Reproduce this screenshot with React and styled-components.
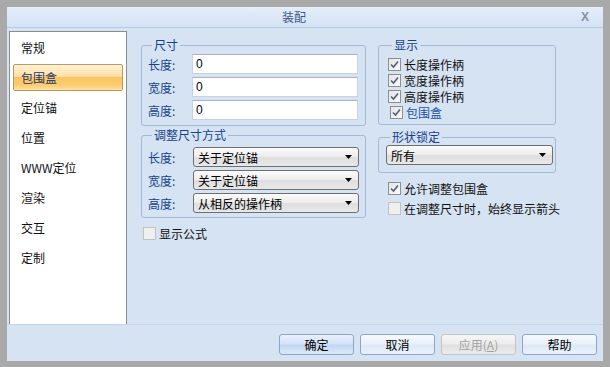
import React from 'react';
import styled, { createGlobalStyle } from 'styled-components';

const GlobalStyle = createGlobalStyle`
    html, body {
        margin: 0;
        padding: 0;
        background: #a9a9a9;
    }
    body {
        font-family: "Noto Sans CJK SC", "Liberation Sans", sans-serif;
        font-size: 12px;
    }
`;

const Frame = styled.div`
    width: 610px;
    height: 367px;
    box-sizing: border-box;
    padding: 7px 7px 6px 7px;
    background: #a9a9a9;
    display: flex;
`;

const Window = styled.div`
    flex: 1;
    display: flex;
    flex-direction: column;
    background: #d6e3f3;
`;

const TitleBar = styled.div`
    height: 20px;
    display: flex;
    align-items: center;
    background: linear-gradient(#e5eefa, #d3e2f5);
    border-bottom: 1px solid #b4cbe8;
`;

const Title = styled.div`
    flex: 1;
    text-align: center;
    color: #3d5a86;
    font-size: 12px;
    line-height: 20px;
`;

const Close = styled.div`
    width: 12px;
    margin-right: 10px;
    color: #8592a3;
    font-family: "Liberation Sans", sans-serif;
    font-weight: bold;
    font-size: 12px;
    line-height: 20px;
`;

const Body = styled.div`
    flex: 1;
    display: flex;
    padding: 3px 0 0 2px;
`;

// left navigation
const Nav = styled.div`
    width: 118px;
    box-sizing: border-box;
    background: white;
    border: 1px solid #8d8d8d;
    border-bottom: none;
    padding: 2px 3px;
    display: flex;
    flex-direction: column;
    gap: 3px;
`;

const NavItem = styled.div`
    height: 27px;
    box-sizing: border-box;
    display: flex;
    align-items: center;
    padding-left: 7px;
    border: 1px solid transparent;
    border-radius: 2px;
    color: #111;
    font-size: 12px;

    ${props => props.$active ? `
        color: #1b3565;
        border-color: #bc9a5c;
        background: linear-gradient(#fff2d6 0%, #fde0a8 45%, #fbc464 50%, #fbcc6e 80%, #fde2a6 100%);
    ` : ''}
`;

const Content = styled.div`
    flex: 1;
    display: flex;
    gap: 12px;
    padding: 7px 0 0 14px;
`;

const Column = styled.div`
    width: ${props => props.$width}px;
    display: flex;
    flex-direction: column;
`;

const Group = styled.fieldset`
    margin: ${props => props.$top || 0}px 0 0 0;
    padding: 0 ${props => props.$right}px ${props => props.$bottom}px ${props => props.$left}px;
    border: 1px solid #a3b9d6;
    border-radius: 3px;
    min-width: 0;
`;

const Legend = styled.legend`
    margin-left: 4px;
    padding: 0 2px;
    color: #15428b;
    font-size: 12px;
    line-height: 14px;
`;

const Rows = styled.div`
    display: flex;
    flex-direction: column;
    gap: ${props => props.$gap}px;
    margin-top: ${props => props.$top}px;
`;

const FieldRow = styled.div`
    display: flex;
    align-items: center;
    height: 20px;
`;

const Label = styled.div`
    width: ${props => props.$width}px;
    color: #15428b;
    font-size: 12px;
`;

const Input = styled.div`
    flex: 1;
    height: 20px;
    box-sizing: border-box;
    background: white;
    border: 1px solid #c7d3e2;
    border-top-color: #a6b4c6;
    padding-left: 3px;
    font-family: "Liberation Sans", sans-serif;
    font-size: 12px;
    line-height: 18px;
    color: #000;
`;

const Select = styled.div`
    flex: 1;
    height: 20px;
    box-sizing: border-box;
    display: flex;
    align-items: center;
    justify-content: space-between;
    padding: 0 6px 0 4px;
    border: 1px solid #6f6f6f;
    border-radius: 3px;
    background: linear-gradient(#fbfbfb, #ececec 50%, #dedede 51%, #e8e8e8);
    color: #000;
    font-size: 12px;
`;

const CheckRow = styled.div`
    display: flex;
    align-items: center;
    gap: 3px;
    height: ${props => props.$height || 16}px;
    padding-left: ${props => props.$indent || 0}px;
    color: ${props => props.$link ? '#1a52a6' : '#111'};
    font-size: 12px;
    white-space: nowrap;
`;

const Box = styled.span`
    flex: none;
    width: 11px;
    height: 11px;
    display: inline-flex;
    align-items: center;
    justify-content: center;
    border: 1px solid ${props => props.$disabled ? '#c2c2c2' : '#8e8f8f'};
    background: ${props => props.$disabled ? '#efefef' : 'linear-gradient(135deg, #e4e4e4, #fafafa)'};
`;

const Footer = styled.div`
    height: 37px;
    box-sizing: border-box;
    border-top: 1px solid #c3d6ed;
    display: flex;
    justify-content: flex-end;
    align-items: flex-start;
    gap: 6px;
    padding: 9px 6px 0 0;
`;

const Button = styled.div`
    width: 75px;
    height: 21px;
    box-sizing: border-box;
    display: flex;
    align-items: center;
    justify-content: center;
    border: 1px solid #8aa6cf;
    border-radius: 3px;
    font-size: 12px;
    color: #000;
    background: ${props => props.$primary
        ? 'linear-gradient(#e8f0fb, #d3e2f6 48%, #c2d6f1 52%, #dce8f8)'
        : 'linear-gradient(#f7faff, #e9f0fa 48%, #dde8f6 52%, #eaf1fb)'};

    &.disabled {
        border-color: #c4c4c4;
        color: #a3a3a3;
        background: linear-gradient(#f6f6f6, #ececec 48%, #e0e0e0 52%, #ebebeb);
    }
`;

const Check = ({ checked, disabled }) => (
    <Box $disabled={disabled}>
        {checked && (
            <svg width="9" height="9" viewBox="0 0 9 9">
                <path d="M1 4.5 L3.5 7 L8 1.5" fill="none" stroke="#4d6080" strokeWidth="1.6" />
            </svg>
        )}
    </Box>
);

const Arrow = () => (
    <svg width="7" height="4" viewBox="0 0 7 4">
        <path d="M0 0 H7 L3.5 4 Z" fill="#000" />
    </svg>
);

const navItems = ['常规', '包围盒', '定位锚', '位置', 'WWW定位', '渲染', '交互', '定制'];

const App = () => (
    <Frame>
        <GlobalStyle />
        <Window>
            <TitleBar>
                <Title>装配</Title>
                <Close>X</Close>
            </TitleBar>
            <Body>
                <Nav>
                    {navItems.map(item => (
                        <NavItem key={item} $active={item === '包围盒'}>{item}</NavItem>
                    ))}
                </Nav>
                <Content>
                    <Column $width={225}>
                        <Group $left={6} $right={7} $bottom={5}>
                            <Legend>尺寸</Legend>
                            <Rows $gap={3} $top={2}>
                                {['长度:', '宽度:', '高度:'].map(l => (
                                    <FieldRow key={l}>
                                        <Label $width={44}>{l}</Label>
                                        <Input>0</Input>
                                    </FieldRow>
                                ))}
                            </Rows>
                        </Group>
                        <Group $top={2} $left={6} $right={6} $bottom={4}>
                            <Legend>调整尺寸方式</Legend>
                            <Rows $gap={3} $top={5}>
                                <FieldRow>
                                    <Label $width={45}>长度:</Label>
                                    <Select>关于定位锚<Arrow /></Select>
                                </FieldRow>
                                <FieldRow>
                                    <Label $width={45}>宽度:</Label>
                                    <Select>关于定位锚<Arrow /></Select>
                                </FieldRow>
                                <FieldRow>
                                    <Label $width={45}>高度:</Label>
                                    <Select>从相反的操作柄<Arrow /></Select>
                                </FieldRow>
                            </Rows>
                        </Group>
                        <Rows $gap={0} $top={7}>
                            <CheckRow $indent={2}>
                                <Check disabled />显示公式
                            </CheckRow>
                        </Rows>
                    </Column>
                    <Column $width={178}>
                        <Group $left={9} $right={4} $bottom={4}>
                            <Legend>显示</Legend>
                            <Rows $gap={0} $top={4}>
                                <CheckRow><Check checked />长度操作柄</CheckRow>
                                <CheckRow><Check checked />宽度操作柄</CheckRow>
                                <CheckRow><Check checked />高度操作柄</CheckRow>
                                <CheckRow $indent={2} $link><Check checked />包围盒</CheckRow>
                            </Rows>
                        </Group>
                        <Group $top={5} $left={7} $right={2} $bottom={7}>
                            <Legend>形状锁定</Legend>
                            <Rows $gap={0} $top={1}>
                                <FieldRow>
                                    <Select>所有<Arrow /></Select>
                                </FieldRow>
                            </Rows>
                        </Group>
                        <Rows $gap={0} $top={5}>
                            <CheckRow $height={20} $indent={10}>
                                <Check checked />允许调整包围盒
                            </CheckRow>
                            <CheckRow $height={20} $indent={10}>
                                <Check disabled />在调整尺寸时，始终显示箭头
                            </CheckRow>
                        </Rows>
                    </Column>
                </Content>
            </Body>
            <Footer>
                <Button $primary>确定</Button>
                <Button>取消</Button>
                <Button className="disabled">应用(<u>A</u>)</Button>
                <Button>帮助</Button>
            </Footer>
        </Window>
    </Frame>
);

export default App;
